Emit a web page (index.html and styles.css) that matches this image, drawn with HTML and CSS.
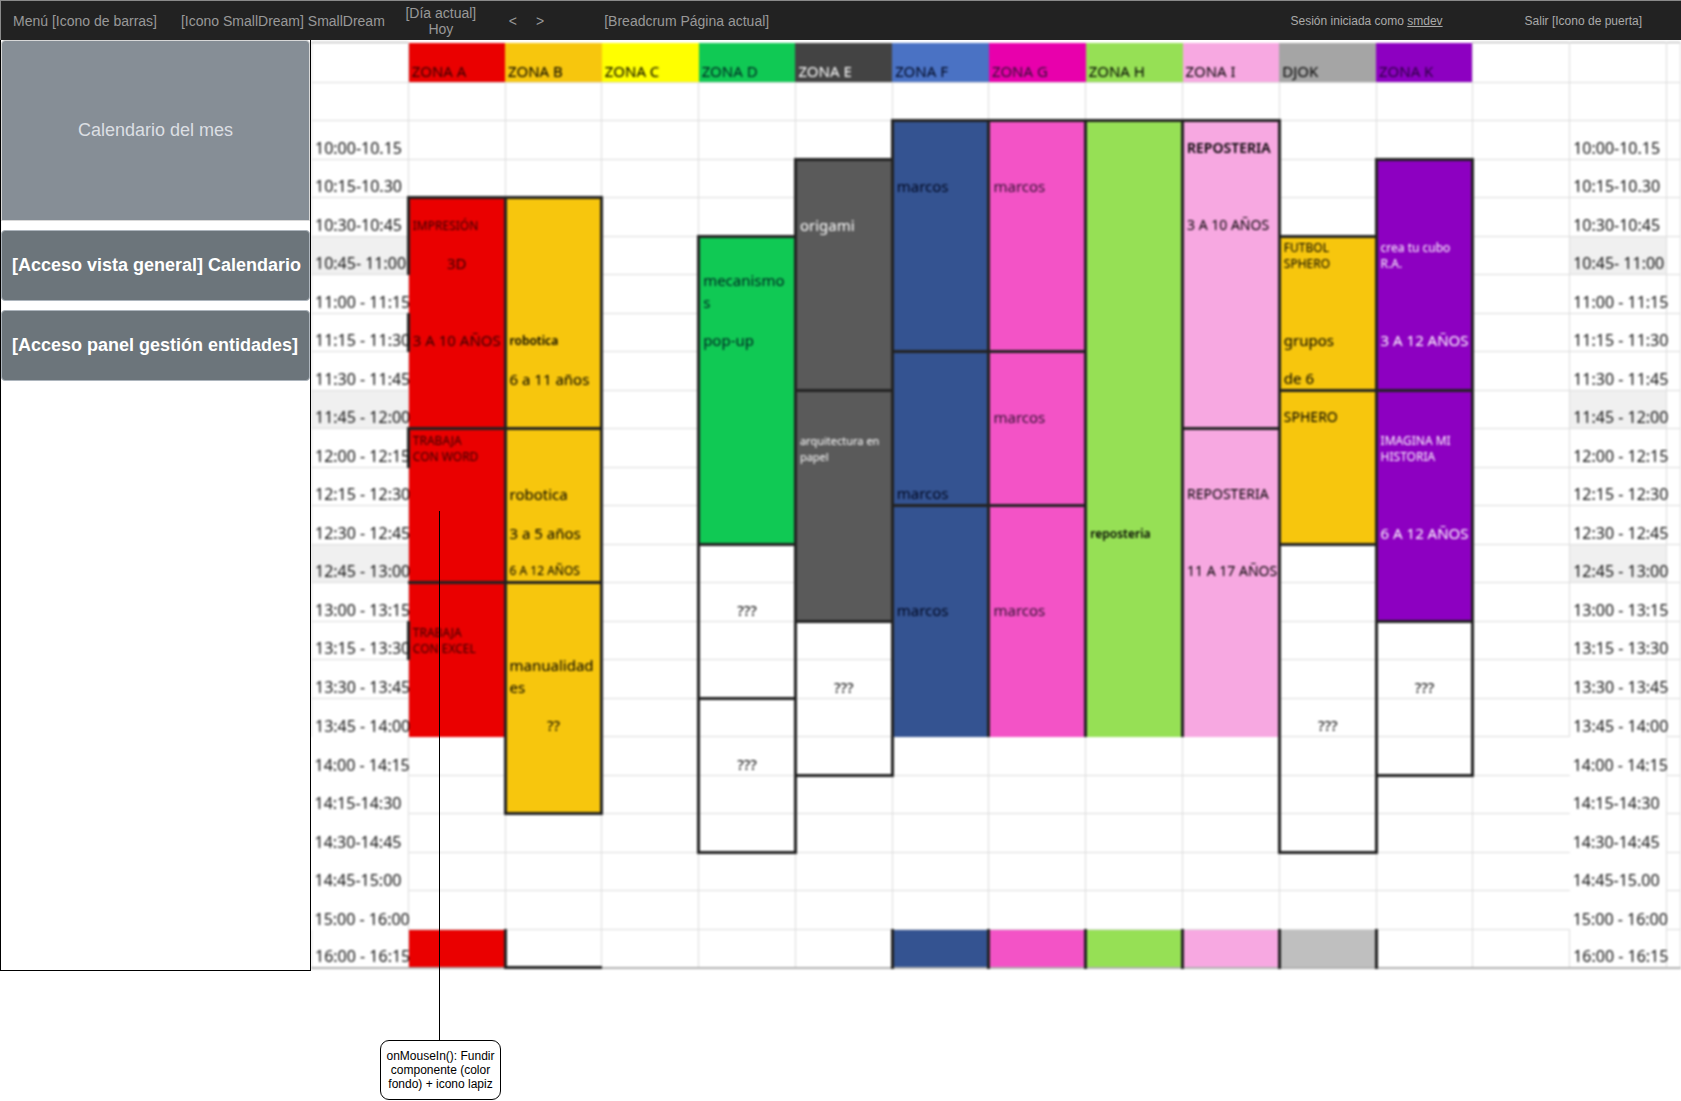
FILE: index.html
```html
<!DOCTYPE html>
<html lang="es">
<head>
<meta charset="utf-8">
<title>SmallDream - Calendario</title>
<link rel="stylesheet" href="styles.css">
</head>
<body>
<header class="navbar">
  <button class="nav-item" type="button">Menú [Icono de barras]</button>
  <a class="nav-item" href="#">[Icono SmallDream] SmallDream</a>
  <button class="nav-item today" type="button">[Día actual] Hoy</button>
  <div class="pager">
    <button class="nav-item" type="button">&lt;</button>
    <button class="nav-item" type="button">&gt;</button>
  </div>
  <span class="nav-item">[Breadcrum Página actual]</span>
  <div class="session">
    <span>Sesión iniciada como <a href="#">smdev</a></span>
    <a class="exit" href="#">Salir [Icono de puerta]</a>
  </div>
</header>
<div class="layout">
  <aside class="sidebar">
    <div class="month">Calendario del mes</div>
    <button class="access" type="button">[Acceso vista general] Calendario</button>
    <button class="access" type="button">[Acceso panel gestión entidades]</button>
  </aside>
  <main class="calendar">
    <table>
      <colgroup><col span="14"><col class="edge"></colgroup>
      <thead>
        <tr><td><th class="a">ZONA A<th class="b">ZONA B<th class="c">ZONA C<th class="d">ZONA D<th class="e">ZONA E<th class="f">ZONA F<th class="g">ZONA G<th class="h">ZONA H<th class="i">ZONA I<th class="j">DJOK<th class="k">ZONA K<td><td><td>
      </thead>
      <tbody>
        <tr><td><td><td><td><td><td><td><td><td><td><td><td><td><td><td>
        <tr><td class="time">10:00-10.15<td><td><td><td><td><td class="f s"><td class="g s"><td class="h s"><td class="i s md strong">REPOSTERIA<td><td><td><td class="time">10:00-10.15<td>
        <tr><td class="time">10:15-10.30<td><td><td><td><td class="e s"><td class="f">marcos<td class="g">marcos<td class="h"><td class="i"><td><td class="k s"><td><td class="time">10:15-10.30<td>
        <tr><td class="time">10:30-10:45<td class="a s m sm">IMPRESIÓN<td class="b s"><td><td><td class="e">origami<td class="f"><td class="g"><td class="h"><td class="i md">3 A 10 AÑOS<td><td class="k"><td><td class="time">10:30-10:45<td>
        <tr><td class="time shade">10:45- 11:00<td class="a m mid">3D<td class="b"><td><td class="d s" rowspan="2">mecanismo<br>s<td class="e"><td class="f"><td class="g"><td class="h"><td class="i"><td class="b s sm">FUTBOL<br>SPHERO<td class="k sm">crea tu cubo<br>R.A.<td><td class="time shade">10:45- 11:00<td>
        <tr><td class="time">11:00 - 11:15<td class="a"><td class="b"><td><td class="e"><td class="f"><td class="g"><td class="h"><td class="i"><td class="b"><td class="k"><td><td class="time">11:00 - 11:15<td>
        <tr><td class="time">11:15 - 11:30<td class="a m">3 A 10 AÑOS<td class="b sm strong">robotica<td><td class="d">pop-up<td class="e"><td class="f"><td class="g"><td class="h"><td class="i"><td class="b">grupos<td class="k">3 A 12 AÑOS<td><td class="time">11:15 - 11:30<td>
        <tr><td class="time">11:30 - 11:45<td class="a"><td class="b">6 a 11 años<td><td class="d"><td class="e"><td class="f s"><td class="g s"><td class="h"><td class="i"><td class="b">de 6<td class="k"><td><td class="time">11:30 - 11:45<td>
        <tr><td class="time shade">11:45 - 12:00<td class="a"><td class="b"><td><td class="d"><td class="e s"><td class="f"><td class="g">marcos<td class="h"><td class="i"><td class="b s md">SPHERO<td class="k s"><td><td class="time shade">11:45 - 12:00<td>
        <tr><td class="time">12:00 - 12:15<td class="a s m sm">TRABAJA<br>CON WORD<td class="b s"><td><td class="d"><td class="e xs">arquitectura en<br>papel<td class="f"><td class="g"><td class="h"><td class="i s"><td class="b"><td class="k sm">IMAGINA MI<br>HISTORIA<td><td class="time">12:00 - 12:15<td>
        <tr><td class="time">12:15 - 12:30<td class="a"><td class="b">robotica<td><td class="d"><td class="e"><td class="f">marcos<td class="g"><td class="h"><td class="i md">REPOSTERIA<td class="b"><td class="k"><td><td class="time">12:15 - 12:30<td>
        <tr><td class="time">12:30 - 12:45<td class="a"><td class="b">3 a 5 años<td><td class="d"><td class="e"><td class="f s"><td class="g s"><td class="h sm strong">reposteria<td class="i"><td class="b"><td class="k">6 A 12 AÑOS<td><td class="time">12:30 - 12:45<td>
        <tr><td class="time shade">12:45 - 13:00<td class="a"><td class="b sm">6 A 12 AÑOS<td><td class="w s"><td class="e"><td class="f"><td class="g"><td class="h"><td class="i md">11 A 17 AÑOS<td class="w s"><td class="k"><td><td class="time shade">12:45 - 13:00<td>
        <tr><td class="time">13:00 - 13:15<td class="a s"><td class="b s"><td><td class="w mid">???<td class="e"><td class="f">marcos<td class="g">marcos<td class="h"><td class="i"><td class="w"><td class="k"><td><td class="time">13:00 - 13:15<td>
        <tr><td class="time">13:15 - 13:30<td class="a m sm">TRABAJA<br>CON EXCEL<td class="b" rowspan="2">manualidad<br>es<td><td class="w"><td class="w s"><td class="f"><td class="g"><td class="h"><td class="i"><td class="w"><td class="w s"><td><td class="time">13:15 - 13:30<td>
        <tr><td class="time">13:30 - 13:45<td class="a"><td><td class="w"><td class="w mid">???<td class="f"><td class="g"><td class="h"><td class="i"><td class="w"><td class="w mid">???<td><td class="time">13:30 - 13:45<td>
        <tr><td class="time">13:45 - 14:00<td class="a"><td class="b mid">??<td><td class="w s"><td class="w"><td class="f"><td class="g"><td class="h"><td class="i"><td class="w mid">???<td class="w"><td><td class="time">13:45 - 14:00<td>
        <tr><td class="time open">14:00 - 14:15<td><td class="b"><td><td class="w mid">???<td class="w z"><td><td><td><td><td class="w"><td class="w z"><td><td class="time open">14:00 - 14:15<td>
        <tr><td class="time open">14:15-14:30<td><td class="b z"><td><td class="w"><td><td><td><td><td><td class="w"><td><td><td class="time open">14:15-14:30<td>
        <tr><td class="time open">14:30-14:45<td><td><td><td class="w z"><td><td><td><td><td><td class="w z"><td><td><td class="time open">14:30-14:45<td>
        <tr><td class="time open">14:45-15:00<td><td><td><td><td><td><td><td><td><td><td><td><td class="time open">14:45-15.00<td>
        <tr><td class="time open">15:00 - 16:00<td><td><td><td><td><td><td><td><td><td><td><td><td class="time open">15:00 - 16:00<td>
        <tr><td class="time">16:00 - 16:15<td class="a r"><td class="z"><td><td><td><td class="f"><td class="g"><td class="h"><td class="i"><td class="j r"><td><td><td class="time">16:00 - 16:15<td>
      </tbody>
    </table>
  </main>
</div>
<div class="note">onMouseIn(): Fundir componente (color fondo) + icono lapiz</div>
</body>
</html>
```
FILE: styles.css
```css
* { box-sizing: border-box; }

body {
  margin: 0;
  background: #fff;
  font-family: "Liberation Sans", Arial, sans-serif;
}

button, a { font: inherit; color: inherit; }

/* Top bar */
.navbar {
  display: flex;
  align-items: center;
  height: 40px;
  padding: 0 39px 0 12px;
  border-top: 1px solid #8a8a8a;
  border-left: 1px solid #8a8a8a;
  background: #222;
  color: #999;
  font-size: 14px;
  line-height: 16px;
}
.nav-item {
  padding: 0;
  margin-right: 24px;
  border: 0;
  background: none;
  text-decoration: none;
  white-space: nowrap;
}
.nav-item.today { width: 72px; margin: 0 32px 0 -4px; white-space: normal; }
.pager { display: flex; gap: 19px; margin-right: 60px; }
.pager .nav-item { margin: 0; }
.session {
  display: flex;
  gap: 82px;
  margin-left: auto;
  color: #aaa;
  font-size: 12px;
  white-space: nowrap;
}
.exit { text-decoration: none; }

/* Page body */
.layout { display: flex; }
.sidebar {
  display: flex;
  flex: none;
  flex-direction: column;
  gap: 9px;
  width: 311px;
  border: 1px solid #000;
  border-top: 0;
  font-size: 18px;
}
.month {
  display: flex;
  align-items: center;
  justify-content: center;
  height: 181px;
  border: 1px solid #d8d8d8;
  border-radius: 4px 4px 0 0;
  background: #868e96;
  color: #dcdfe3;
}
.access {
  height: 71px;
  padding: 0 10px;
  border: 1px solid #adb5bd;
  border-radius: 4px;
  background: #6c757b;
  color: #fff;
  font-weight: bold;
  text-align: left;
  white-space: nowrap;
}

/* Calendar */
.calendar {
  flex: 1;
  min-width: 0;
  padding: 2px 0;
  overflow: hidden;
}
table {
  width: 100%;
  border-collapse: collapse;
  table-layout: fixed;
  border-bottom: 2px solid #b0b0b0;
  font-family: "Noto Sans", sans-serif;
  font-size: 15px;
  line-height: 22px;
  color: #000;
  filter: blur(1px);
}
.edge { width: 14px; }
tr { height: 39px; }
thead tr { height: 40px; }
tbody tr:nth-child(odd) { height: 38px; }
td, th {
  padding: 0 0 0 3px;
  border: 1px solid #dcdcdc;
  font-weight: normal;
  text-align: left;
  vertical-align: bottom;
  white-space: nowrap;
}
th { border-width: 0; }
thead td { border-top-color: #aaa; }
.time { font-size: 16px; color: #111; }
.shade { background: #f0f0f0; }
.open { border-style: hidden solid hidden hidden; }

/* Zones */
.a { background: #ea0000; border-color: #ea0000; color: #300; }
.b { background: #f7c60d; border-color: #f7c60d; }
.c { background: #ff0; }
.d { background: #10c954; border-color: #10c954; color: #022; }
.e { background: #5a5a5a; border-color: #5a5a5a; color: #fff; }
.f { background: #345391; border-color: #345391; color: #000820; }
.g { background: #f353c6; border-color: #f353c6; color: #301030; }
.h { background: #96e055; border-color: #96e055; }
.i { background: #f7a8e1; border-color: #f7a8e1; }
.j { background: #bfbfbf; border-color: #bfbfbf; }
.k { background: #8d00c1; border-color: #8d00c1; color: #fff; }
th.e { background: #434343; }
th.f { background: #4a72c4; }
th.g { background: #e800ac; }
th.j { background: #a5a5a5; }
th.k { color: #2a0040; }

/* Edges of the activity blocks */
td.b, td.d, td.e, td.f, td.g, td.h, td.i, td.k, td.w {
  border-left: 3px solid #222;
  border-right: 3px solid #222;
}
td.m { border-left: 3px solid #222; }
td.r { border-right: 3px solid #222; }
td.s { border-top: 3px solid #222; }
td.z { border-bottom: 3px solid #222; }

/* Text variants */
.mid { padding: 0; text-align: center; }
.md { font-size: 14px; }
.sm { padding-bottom: 2px; font-size: 12px; line-height: 16px; }
.xs { padding-bottom: 2px; font-size: 11px; line-height: 16px; }
.strong { font-weight: 600; }

/* Annotation with its leader line */
.note {
  position: relative;
  width: 121px;
  margin: 69px 0 0 380px;
  padding: 8px 4px;
  border: 1px solid #000;
  border-radius: 9px;
  background: #fff;
  font-size: 12px;
  line-height: 14px;
  text-align: center;
}
.note::before {
  content: "";
  position: absolute;
  bottom: 100%;
  left: 49%;
  height: 530px;
  border-left: 1px solid #000;
}
```
